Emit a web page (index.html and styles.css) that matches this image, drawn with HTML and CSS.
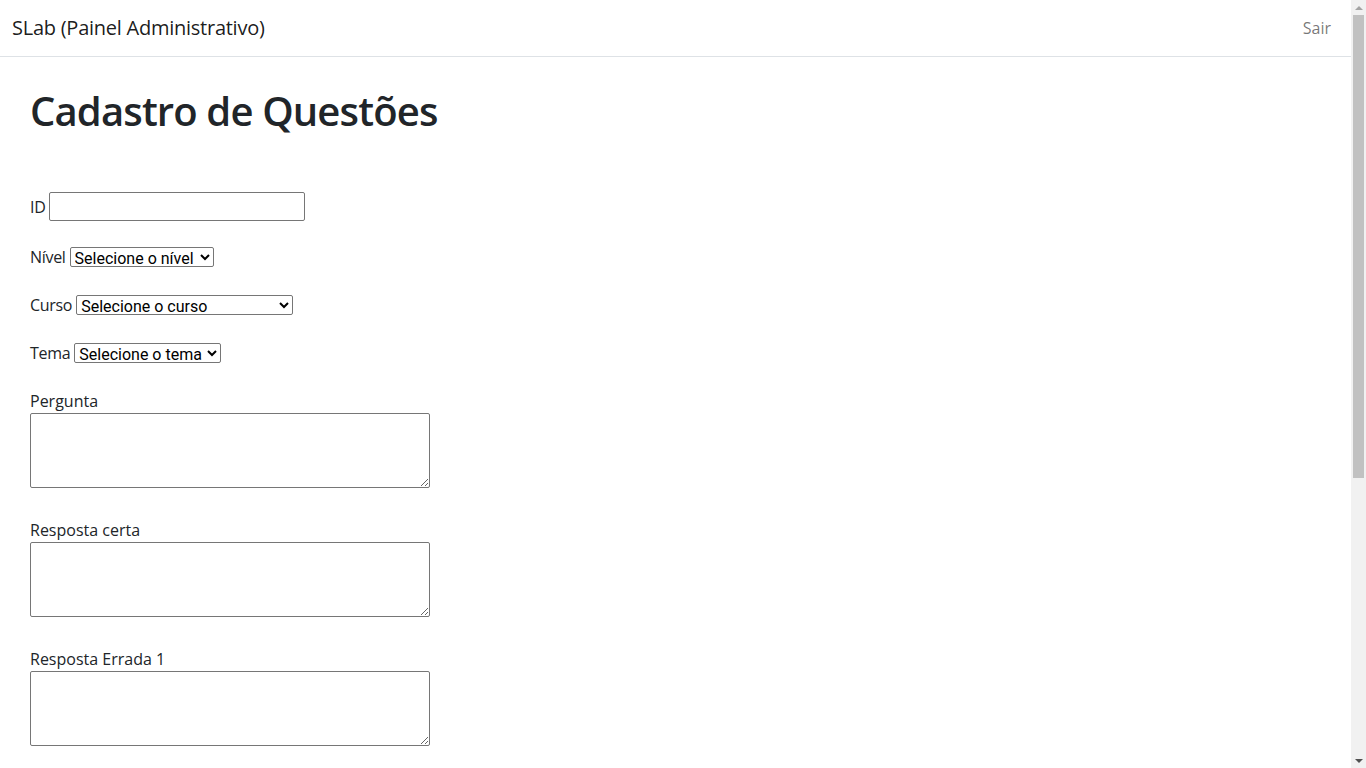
FILE: index.html
```html
<!DOCTYPE html>
<html lang="pt-BR">
<head>
<meta charset="utf-8">
<title>SLab (Painel Administrativo)</title>
<link rel="stylesheet" href="styles.css">
</head>
<body>
<nav class="navbar">
  <a class="brand" href="#">SLab (Painel Administrativo)</a>
  <a class="nav-link" href="#">Sair</a>
</nav>
<main class="content">
  <h1 class="title">Cadastro de Questões</h1>
  <form class="form">
    <div class="row">
      <label for="id">ID</label>
      <input id="id" class="input-id" type="text">
    </div>
    <div class="row">
      <label for="nivel">Nível</label>
      <select id="nivel" class="sel sel-nivel"><option>Selecione o nível</option></select>
    </div>
    <div class="row">
      <label for="curso">Curso</label>
      <select id="curso" class="sel sel-curso"><option>Selecione o curso</option></select>
    </div>
    <div class="row">
      <label for="tema">Tema</label>
      <select id="tema" class="sel sel-tema"><option>Selecione o tema</option></select>
    </div>
    <div class="block">
      <label for="pergunta">Pergunta</label>
      <textarea id="pergunta" class="area"></textarea>
    </div>
    <div class="block">
      <label for="certa">Resposta certa</label>
      <textarea id="certa" class="area"></textarea>
    </div>
    <div class="block">
      <label for="errada1">Resposta Errada 1</label>
      <textarea id="errada1" class="area"></textarea>
    </div>
    <div class="block">
      <label for="errada2">Resposta Errada 2</label>
      <textarea id="errada2" class="area"></textarea>
    </div>
    <div class="block">
      <label for="errada3">Resposta Errada 3</label>
      <textarea id="errada3" class="area"></textarea>
    </div>
    <div class="block">
      <label for="errada4">Resposta Errada 4</label>
      <textarea id="errada4" class="area"></textarea>
    </div>
    <div class="actions">
      <button type="button" class="btn">Cadastrar</button>
    </div>
  </form>
</main>
<div class="scrollbar" aria-hidden="true">
  <span class="sb-btn"><span class="sb-arrow-up"></span></span>
  <span class="sb-track"><span class="sb-thumb"></span></span>
  <span class="sb-btn"><span class="sb-arrow-down"></span></span>
</div>
</body>
</html>
```
FILE: styles.css
```css
html, body {
  margin: 0;
  padding: 0;
  background: #fff;
}
body {
  padding-right: 15px;
  font-family: "Open Sans", "Liberation Sans", sans-serif;
  font-size: 16px;
  line-height: 1.5;
  color: #212529;
}

/* browser scrollbar as seen in the screenshot */
.scrollbar {
  position: fixed;
  top: 0;
  right: 0;
  bottom: 0;
  width: 15px;
  background: #f1f1f1;
  display: flex;
  flex-direction: column;
}
.sb-btn {
  height: 15px;
  flex: none;
  display: flex;
  align-items: center;
  justify-content: center;
}
.sb-arrow-up {
  width: 0;
  height: 0;
  border-left: 4px solid transparent;
  border-right: 4px solid transparent;
  border-bottom: 4px solid #a3a3a3;
}
.sb-arrow-down {
  width: 0;
  height: 0;
  border-left: 4px solid transparent;
  border-right: 4px solid transparent;
  border-top: 4px solid #505050;
}
.sb-track {
  flex: 1;
  display: flex;
  flex-direction: column;
  padding: 0 2px;
}
.sb-thumb {
  height: 463px;
  background: #c1c1c1;
}

.navbar {
  display: flex;
  align-items: center;
  justify-content: space-between;
  padding: 8px 12px;
  border-bottom: 1px solid #dee2e6;
}
.brand {
  font-size: 20px;
  line-height: 30px;
  padding: 5px 0;
  color: rgba(0, 0, 0, 0.9);
  text-decoration: none;
  letter-spacing: -0.25px;
}
.nav-link {
  padding: 8px 8px;
  color: rgba(0, 0, 0, 0.55);
  text-decoration: none;
}
.content {
  padding: 30px 30px 30px;
}
.title {
  margin: 0;
  font-size: 40px;
  font-weight: 600;
  line-height: 1.2;
  letter-spacing: -0.85px;
}
.form {
  margin-top: 57px;
  display: flex;
  flex-direction: column;
}
.row {
  display: flex;
  align-items: center;
  gap: 4px;
  margin-bottom: 24px;
  min-height: 24px;
}
.row label {
  line-height: 24px;
  letter-spacing: -0.3px;
}
.input-id {
  box-sizing: border-box;
  width: 256px;
  height: 29px;
  padding: 1px 2px;
  border: 1px solid #767676;
  border-radius: 2px;
  font: inherit;
}
.sel {
  box-sizing: border-box;
  height: 20px;
  padding: 0;
  border: 1px solid #767676;
  border-radius: 2px;
  background: #fff;
  color: #000;
  font-family: Roboto, "Liberation Sans", sans-serif;
  font-size: 16px;
}
.sel-nivel { width: 144px; }
.sel-curso { width: 217px; }
.sel-tema { width: 147px; }
.block {
  display: flex;
  flex-direction: column;
  align-items: flex-start;
  margin-bottom: 30px;
}
.block label {
  line-height: 24px;
}
.area {
  box-sizing: border-box;
  width: 400px;
  height: 75px;
  padding: 2px;
  border: 1px solid #767676;
  border-radius: 2px;
  font: inherit;
  resize: both;
}
.btn {
  font: inherit;
  color: #fff;
  background: #0d6efd;
  border: 1px solid #0d6efd;
  border-radius: 6px;
  padding: 6px 12px;
  line-height: 24px;
  cursor: pointer;
}
```
